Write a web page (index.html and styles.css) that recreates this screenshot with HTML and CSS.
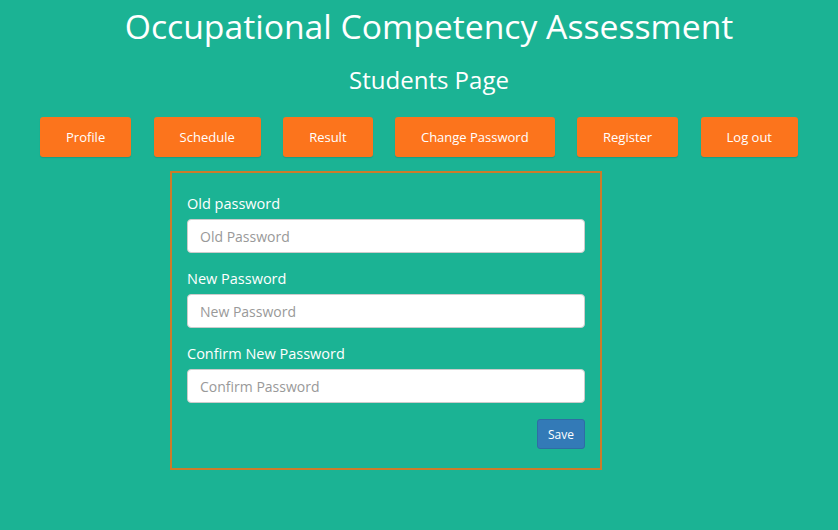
FILE: index.html
```html
<!DOCTYPE html>
<html>
<head>
<meta charset="utf-8">
<link rel="stylesheet" href="styles.css">
</head>
<body>
<header class="header">
  <h1 class="title">Occupational Competency Assessment</h1>
  <h2 class="subtitle">Students Page</h2>
</header>
<nav class="nav">
  <a class="nav-btn">Profile</a>
  <a class="nav-btn">Schedule</a>
  <a class="nav-btn">Result</a>
  <a class="nav-btn">Change Password</a>
  <a class="nav-btn">Register</a>
  <a class="nav-btn">Log out</a>
</nav>
<form class="card">
  <div class="group">
    <label class="label">Old password</label>
    <input class="input" type="password" placeholder="Old Password">
  </div>
  <div class="group">
    <label class="label">New Password</label>
    <input class="input" type="password" placeholder="New Password">
  </div>
  <div class="group">
    <label class="label">Confirm New Password</label>
    <input class="input" type="password" placeholder="Confirm Password">
  </div>
  <div class="actions">
    <button class="save" type="button">Save</button>
  </div>
</form>
</body>
</html>
```
FILE: styles.css
```css
* { box-sizing: border-box; }
html, body { margin: 0; padding: 0; }
body {
  background: #1bb394;
  font-family: "Open Sans", "Liberation Sans", sans-serif;
  color: #fff;
  width: 838px;
  height: 530px;
  overflow: hidden;
}
.header { text-align: center; padding-left: 20px; }
.title {
  margin: 6px 0 0;
  font-size: 33.7px;
  font-weight: 400;
  line-height: 40px;
}
.subtitle {
  margin: 20px 0 0;
  font-size: 24px;
  font-weight: 400;
  line-height: 28px;
}
.nav {
  display: flex;
  justify-content: center;
  gap: 22.4px;
  margin-top: 23px;
}
.nav-btn {
  display: block;
  height: 40px;
  line-height: 40px;
  padding: 0 26px;
  background: #fc741c;
  color: #fff;
  font-size: 13px;
  border-radius: 3px;
  box-shadow: 0 1px 1px rgba(0,0,0,0.12);
}
.card {
  width: 432px;
  margin: 14px 0 0 170px;
  border: 2px solid #cb7c2a;
  padding: 21px 15px 19px;
}
.group { margin-bottom: 16px; }
.label {
  display: block;
  font-size: 14.5px;
  line-height: 20px;
  margin-bottom: 5px;
}
.input {
  display: block;
  width: 100%;
  height: 34px;
  border: 1px solid #ccc;
  border-radius: 4px;
  padding: 6px 12px;
  font-family: inherit;
  font-size: 14px;
  color: #555;
  background: #fff;
}
.input::placeholder { color: #999; }
.actions { display: flex; justify-content: flex-end; }
.save {
  height: 30px;
  padding: 0 10px;
  font-family: inherit;
  font-size: 12px;
  color: #fff;
  background: #337ab7;
  border: 1px solid #2e6da4;
  border-radius: 3px;
}
```
